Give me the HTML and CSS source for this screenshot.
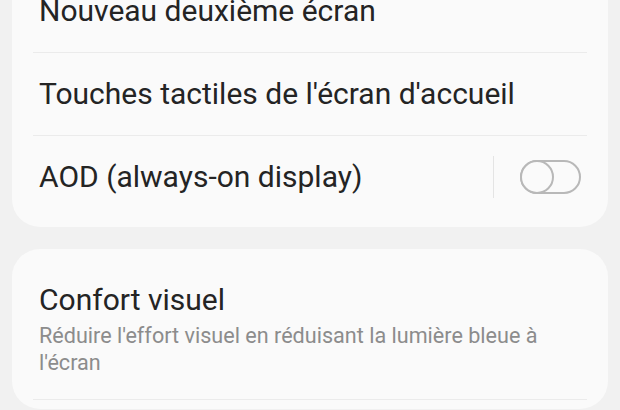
FILE: index.html
```html
<!DOCTYPE html>
<html lang="fr">
<head>
    <meta charset="UTF-8">
    <meta name="viewport" content="width=device-width, initial-scale=1.0">
    <title>Fond d'écran</title>
    <link rel="stylesheet" href="styles.css">
</head>
<body>
    <section class="page">
        <ul class="card card-top">
            <li class="row"><span class="title">Nouveau deuxième écran</span></li>
            <li class="row"><span class="title">Touches tactiles de l'écran d'accueil</span></li>
            <li class="row">
                <span class="title">AOD (always-on display)</span>
                <span class="sep"></span>
                <span class="switch"><i></i></span>
            </li>
        </ul>
        <ul class="card">
            <li class="row row-tall">
                <div class="text">
                    <span class="title">Confort visuel</span>
                    <p class="sub">Réduire l'effort visuel en réduisant la lumière bleue à l'écran</p>
                </div>
            </li>
        </ul>
    </section>
</body>
</html>
```
FILE: styles.css
```css
* {
    margin: 0;
    padding: 0;
    box-sizing: border-box;
}

ul,
li {
    list-style: none;
}

body {
    background: #f1f1f1;
    font-family: Roboto, "Noto Sans", sans-serif;
    color: #242424;
    overflow: hidden;
}

.page {
    padding: 0 12px;
    display: flex;
    flex-direction: column;
    gap: 22px;
}

.card {
    background: #fafafa;
    border-radius: 28px;
    padding: 9px 21px;
}

.card-top {
    margin-top: -39px;
    border-radius: 0 0 28px 28px;
}

.row {
    display: flex;
    align-items: center;
    height: 82px;
    padding: 0 6px;
}

.row + .row {
    border-top: 1px solid #ebebeb;
    height: 83px;
}

.row-tall {
    height: 142px;
    align-items: flex-start;
    padding-top: 25px;
    border-bottom: 1px solid #ebebeb;
}

.title {
    display: block;
    font-size: 30px;
    line-height: 34px;
    flex: 1;
}

.text {
    flex: 1;
}

.sub {
    margin-top: 5px;
    font-size: 21.6px;
    line-height: 27px;
    color: #8c8c8c;
    padding-right: 20px;
}

.sep {
    width: 1px;
    height: 42px;
    background: #e4e4e4;
    margin-right: 26px;
}

.switch {
    position: relative;
    width: 61px;
    height: 34px;
    border: 2px solid #b8b8b8;
    border-radius: 17px;
}

.switch i {
    position: absolute;
    left: -2px;
    top: -2px;
    width: 34px;
    height: 34px;
    border: 2px solid #b8b8b8;
    border-radius: 50%;
    background: #fafafa;
}
```
